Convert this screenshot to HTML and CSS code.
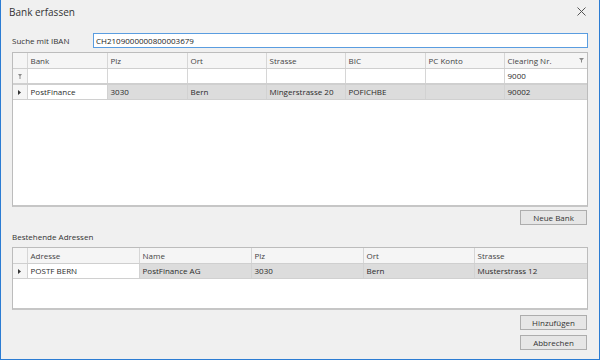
FILE: index.html
```html
<!DOCTYPE html>
<html lang="de">
<head>
  <meta charset="UTF-8" />
  <title>Bank erfassen</title>
  <link rel="stylesheet" href="styles.css">
</head>
<body>
  <div class="window">
    <div class="titlebar">
      <span class="title">Bank erfassen</span>
      <svg class="close" width="9" height="9" viewBox="0 0 9 9">
        <path d="M0.5 0.5L8.5 8.5M8.5 0.5L0.5 8.5" stroke="#555" stroke-width="1" />
      </svg>
    </div>

    <div class="search-row">
      <label for="iban">Suche mit IBAN</label>
      <input type="text" id="iban" value="CH2109000000800003679" />
    </div>

    <div class="grid grid-banks">
      <table>
        <colgroup>
          <col style="width:14px"><col style="width:80px"><col style="width:80px"><col style="width:79px">
          <col style="width:79px"><col style="width:80px"><col style="width:79px"><col style="width:83px">
        </colgroup>
        <thead>
          <tr>
            <th class="ind"></th>
            <th>Bank</th>
            <th>Plz</th>
            <th>Ort</th>
            <th>Strasse</th>
            <th>BIC</th>
            <th>PC Konto</th>
            <th>
              <div class="th-filter">
                <span>Clearing Nr.</span>
                <svg width="5" height="5" viewBox="0 0 5 5"><path d="M0 0H5L3 2.2V4.5H2V2.2Z" fill="#8a8a8a" /></svg>
              </div>
            </th>
          </tr>
        </thead>
        <tbody>
          <tr class="filter-row">
            <td class="ind">
              <svg width="4" height="5" viewBox="0 0 4 5"><path d="M0 0H4L2.5 2V5H1.5V2Z" fill="#8a8a8a" /></svg>
            </td>
            <td></td><td></td><td></td><td></td><td></td><td></td>
            <td>9000</td>
          </tr>
          <tr class="data-row">
            <td class="ind">
              <svg width="3" height="5" viewBox="0 0 3 5"><path d="M0 0L3 2.5L0 5Z" fill="#333" /></svg>
            </td>
            <td class="focus">PostFinance</td>
            <td>3030</td>
            <td>Bern</td>
            <td>Mingerstrasse 20</td>
            <td>POFICHBE</td>
            <td></td>
            <td>90002</td>
          </tr>
        </tbody>
      </table>
    </div>

    <div class="button-row">
      <button>Neue Bank</button>
    </div>

    <p class="section-label">Bestehende Adressen</p>

    <div class="grid grid-addresses">
      <table>
        <colgroup>
          <col style="width:14px"><col style="width:112px"><col style="width:112px"><col style="width:112px">
          <col style="width:111px"><col style="width:113px">
        </colgroup>
        <thead>
          <tr>
            <th class="ind"></th>
            <th>Adresse</th>
            <th>Name</th>
            <th>Plz</th>
            <th>Ort</th>
            <th>Strasse</th>
          </tr>
        </thead>
        <tbody>
          <tr class="data-row">
            <td class="ind">
              <svg width="3" height="5" viewBox="0 0 3 5"><path d="M0 0L3 2.5L0 5Z" fill="#333" /></svg>
            </td>
            <td class="focus">POSTF BERN</td>
            <td>PostFinance AG</td>
            <td>3030</td>
            <td>Bern</td>
            <td>Musterstrass 12</td>
          </tr>
        </tbody>
      </table>
    </div>

    <div class="footer-buttons">
      <button>Hinzufügen</button>
      <button>Abbrechen</button>
    </div>
  </div>
</body>
</html>
```

FILE: styles.css
```css
/* Base */
* {
  box-sizing: border-box;
  margin: 0;
  padding: 0;
}

body {
  font-family: 'Open Sans', 'Noto Sans', sans-serif;
  font-size: 8px;
  color: #2b2b2b;
  background: #f0f0f0;
}

.window {
  width: 600px;
  height: 360px;
  background: #f0f0f0;
  border: 1px solid #2b7cd3;
  border-top: none;
  padding: 0 11px;
  display: flex;
  flex-direction: column;
}

/* Title bar */
.titlebar {
  height: 24px;
  margin-left: -3px;
  display: flex;
  align-items: center;
  justify-content: space-between;
}

.title {
  font-size: 10px;
  color: #333;
}

.close {
  margin-right: 2px;
  margin-top: -2px;
}

/* Search */
.search-row {
  margin-top: 9px;
  height: 15px;
  display: flex;
  align-items: center;
}

.search-row label {
  width: 81px;
  color: #333;
}

.search-row input {
  flex: 1;
  height: 15px;
  border: 1px solid #5a9de0;
  background: white;
  font-family: inherit;
  font-size: 8px;
  color: #222;
  padding: 0 2px;
  outline: none;
}

/* Grids */
.grid {
  background: white;
  border: 1px solid #bcbcbc;
  border-bottom-width: 2px;
  border-bottom-color: #c6c6c6;
  overflow: hidden;
}

.grid-banks {
  margin-top: 4px;
  height: 155px;
}

.grid-addresses {
  height: 63px;
}

.grid table {
  border-collapse: collapse;
  table-layout: fixed;
  width: 100%;
}

.grid th,
.grid td {
  height: 15px;
  padding: 0 3px;
  text-align: left;
  font-weight: normal;
  white-space: nowrap;
  overflow: hidden;
  border-right: 1px solid #d6d6d6;
  border-bottom: 1px solid #d6d6d6;
}

.grid th:last-child,
.grid td:last-child {
  border-right: none;
}

.grid th {
  background: #f5f5f5;
  color: #444;
  border-bottom-color: #cfcfcf;
}

.grid .ind {
  padding: 0;
  text-align: center;
  background: #f5f5f5;
}

.th-filter {
  display: flex;
  justify-content: space-between;
  align-items: center;
}

.filter-row td {
  height: 16px;
  border-bottom: 2px solid #cfcfcf;
}

.data-row td {
  background: #dcdcdc;
  border-right-color: #d2d2d2;
  border-bottom: 1px solid #d0d0d0;
}

.data-row td.ind {
  background: #f5f5f5;
}

.data-row td.focus {
  background: white;
}

/* Buttons */
button {
  width: 67px;
  height: 15px;
  background: #e6e6e6;
  border: 1px solid #adadad;
  font-family: inherit;
  font-size: 8px;
  color: #333;
}

.button-row {
  margin-top: 3px;
  display: flex;
  justify-content: flex-end;
  padding-right: 1px;
}

.section-label {
  margin-top: 5px;
  margin-bottom: 4px;
  height: 13px;
  line-height: 13px;
  color: #333;
}

.footer-buttons {
  margin-top: 5px;
  display: flex;
  flex-direction: column;
  align-items: flex-end;
  gap: 5px;
  padding-right: 1px;
}
```
